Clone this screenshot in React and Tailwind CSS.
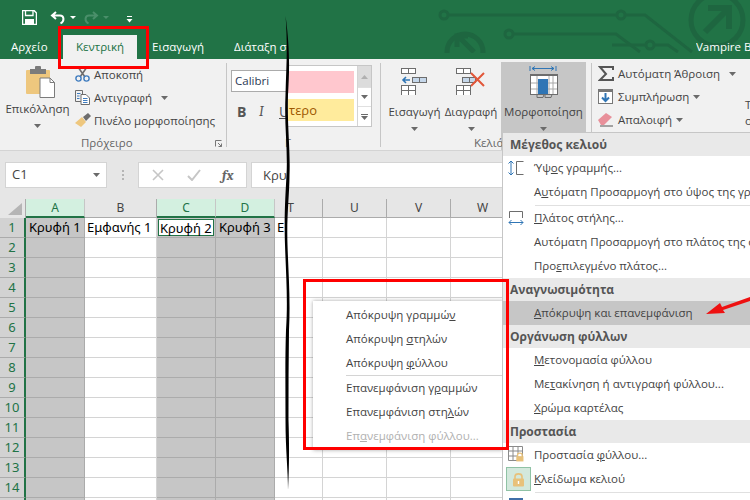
import React from "react";

const ui = { fontFamily: '"Open Sans", "Noto Sans", sans-serif' };
const cellFont = { fontFamily: '"Noto Sans", "Open Sans", sans-serif' };

const Caret = ({ className = "" }) => (
  <svg width="7" height="4" viewBox="0 0 7 4" className={className}>
    <path d="M0 0h7L3.5 4z" fill="#6a6a6a" />
  </svg>
);

const ScreenCircuit = () => (
  <svg className="absolute left-0 top-0" width="750" height="53" viewBox="0 0 750 53" fill="none" stroke="#1e6640" strokeWidth="3">
    <circle cx="444" cy="15" r="4" />
    <circle cx="621" cy="15" r="4" />
    <path d="M448 15H617M625 15H645L692 52" />
    <circle cx="509" cy="34" r="4" />
    <path d="M513 34H616L640 52" />
    <circle cx="650" cy="45" r="4" />
    <path d="M612 45H646M654 45H668L678 52" />
    <circle cx="465" cy="52" r="18" strokeWidth="5" />
    <path d="M474 52L458 36M457 47V36H468" strokeWidth="5" />
    <circle cx="717" cy="20" r="26" strokeWidth="5" />
    <path d="M705 32L727 10M708 8H729V29" strokeWidth="6" />
  </svg>
);

const TitleBar = () => (
  <div className="h-[35px] flex items-center pl-[22px]">
    <svg width="15" height="15" viewBox="0 0 15 15" className="relative">
      <path d="M0.5 0.5H12L14.5 3V14.5H0.5z" fill="none" stroke="#fff" strokeWidth="1.5" />
      <path d="M3.5 1V5.5H11V1" fill="none" stroke="#fff" strokeWidth="1.3" />
      <path d="M3 9H12V14H3z" fill="#fff" />
    </svg>
    <svg width="16" height="14" viewBox="0 0 16 14" className="ml-[13px] relative">
      <path d="M6 1L2 4.5L6 8M2 4.5H10C14 4.5 15 10 10.5 12.5" fill="none" stroke="#fff" strokeWidth="2" />
    </svg>
    <svg width="6" height="3" viewBox="0 0 6 3" className="ml-[4px] relative">
      <path d="M0 0h6L3 3z" fill="#fff" />
    </svg>
    <svg width="16" height="14" viewBox="0 0 16 14" className="ml-[7px] relative">
      <path d="M10 1L14 4.5L10 8M14 4.5H6C2 4.5 1 10 5.5 12.5" fill="none" stroke="#4a8f6a" strokeWidth="2" />
    </svg>
    <svg width="6" height="3" viewBox="0 0 6 3" className="ml-[4px] relative">
      <path d="M0 0h6L3 3z" fill="#4a8f6a" />
    </svg>
    <svg width="7" height="7" viewBox="0 0 7 7" className="ml-[17px] mt-[3px] relative">
      <path d="M1 0.5H6" stroke="#fff" />
      <path d="M0.5 3h6L3.5 6.5z" fill="#fff" />
    </svg>
  </div>
);

const Tabs = () => (
  <div className="h-[24px] flex items-center text-white text-[11.5px] relative">
    <span className="ml-[11px] w-[52px]">Αρχείο</span>
    <span className="h-full w-[74px] bg-[#f1f1f1] text-[#217346] flex items-center justify-center">Κεντρική</span>
    <span className="ml-[15px] w-[82px]">Εισαγωγή</span>
    <span className="w-[54px] whitespace-nowrap overflow-hidden">Διάταξη σ</span>
    <span className="ml-auto whitespace-nowrap w-[54px] overflow-hidden">Vampire B</span>
  </div>
);

const ClipboardIcon = () => (
  <svg width="29" height="32" viewBox="0 0 29 32">
    <rect x="0" y="4" width="24" height="24" rx="1" fill="#eec77e" />
    <rect x="4" y="3" width="16" height="5" fill="#7b7b7b" />
    <rect x="9" y="0" width="6" height="5" rx="1" fill="#7b7b7b" />
    <path d="M14 12H24L28.5 16.5V31.5H14z" fill="#fff" stroke="#7b7b7b" />
    <path d="M24 12V16.5H28.5" fill="none" stroke="#7b7b7b" />
  </svg>
);

const ScissorsIcon = () => (
  <svg width="15" height="15" viewBox="0 0 15 15" fill="none">
    <path d="M3 0L10 10M12 0L5 10" stroke="#6d6d6d" strokeWidth="1.6" />
    <circle cx="3.5" cy="11.5" r="2.6" stroke="#3f7cbf" strokeWidth="1.4" />
    <circle cx="11.5" cy="11.5" r="2.6" stroke="#3f7cbf" strokeWidth="1.4" />
  </svg>
);

const CopyIcon = () => (
  <svg width="15" height="15" viewBox="0 0 15 15" fill="none">
    <path d="M0.5 0.5H7.5V11.5H0.5z" stroke="#6d6d6d" />
    <path d="M6 4.5H11L14.5 8V14.5H6z" fill="#fff" stroke="#6d6d6d" />
    <path d="M2 3.5H5.5M2 6H4.5M2 8.5H4.5M8 8.5H12.5M8 10.5H12.5M8 12.5H12.5" stroke="#3f7cbf" />
  </svg>
);

const BrushIcon = () => (
  <svg width="17" height="15" viewBox="0 0 17 15">
    <path d="M0 10L7 4L11 9L6 14C4 13 2 11 0 10z" fill="#eec77e" />
    <path d="M8 4L13 0L16 3L11 8z" fill="#6d6d6d" />
  </svg>
);

const TableMini = ({ x, y }) => (
  <g fill="#fff" stroke="#6d6d6d">
    <rect x={x} y={y} width="7" height="5" />
    <rect x={x + 7} y={y} width="7" height="5" />
  </g>
);

const InsertCellsIcon = () => (
  <svg width="27" height="27" viewBox="0 0 27 27">
    <rect x="0.5" y="0.5" width="7" height="5" fill="#fff" stroke="#6d6d6d" />
    <rect x="7.5" y="0.5" width="7" height="5" fill="#fff" stroke="#6d6d6d" />
    <rect x="11.5" y="9.5" width="7" height="5" fill="#c5d7ea" stroke="#6d6d6d" />
    <rect x="18.5" y="9.5" width="7" height="5" fill="#c5d7ea" stroke="#6d6d6d" />
    <path d="M2 12H9M5 9L2 12L5 15" fill="none" stroke="#2f75b5" strokeWidth="1.6" />
    <TableMini x={0.5} y={17.5} />
    <TableMini x={0.5} y={22.5} />
  </svg>
);

const DeleteCellsIcon = () => (
  <svg width="30" height="27" viewBox="0 0 30 27">
    <rect x="0.5" y="0.5" width="7" height="5" fill="#fff" stroke="#6d6d6d" />
    <rect x="7.5" y="0.5" width="7" height="5" fill="#fff" stroke="#6d6d6d" />
    <rect x="6.5" y="9.5" width="7" height="5" fill="#c5d7ea" stroke="#6d6d6d" />
    <rect x="13.5" y="9.5" width="6" height="5" fill="#c5d7ea" stroke="#6d6d6d" />
    <path d="M15 5L28 18M28 5L15 18" stroke="#e2573a" strokeWidth="2" />
    <TableMini x={0.5} y={17.5} />
    <TableMini x={0.5} y={22.5} />
  </svg>
);

const FormatCellsIcon = () => (
  <svg width="29" height="32" viewBox="0 0 29 32" fill="none">
    <path d="M1 0V5M27 0V5M3 2.5H25M6 0.5L3 2.5L6 4.5M22 0.5L25 2.5L22 4.5" stroke="#2f75b5" />
    <rect x="1.5" y="8.5" width="27" height="20" fill="#fff" stroke="#6d6d6d" />
    <rect x="1" y="8" width="28" height="2" fill="#6d6d6d" />
    <path d="M8 10V28M20 10V28M24 10V28M2 17H28M2 23H28" stroke="#a8a8a8" />
    <rect x="9" y="13" width="10" height="15" fill="#2f75b5" />
    <path d="M8 28.5V31.5H14L15 28.5M16 28.5V31.5H22L23 28.5" stroke="#6d6d6d" />
  </svg>
);

const SmallRow = ({ icon, label, caret, iconWidth = "w-[19px]" }) => (
  <div className="flex items-center h-[23px]">
    <span className={`${iconWidth} flex items-center shrink-0`}>{icon}</span>
    <span className="whitespace-nowrap">{label}</span>
    {caret}
  </div>
);

const BigButton = ({ icon, label, width }) => (
  <div className={`flex flex-col items-center shrink-0 ${width}`}>
    <div className="h-[34px] flex items-center justify-center mt-[2px]">{icon}</div>
    <div className="mt-[5px] leading-[18px] whitespace-nowrap">{label}</div>
    <Caret className="mt-[6px]" />
  </div>
);

const Separator = () => <div className="w-px h-[84px] bg-[#c6c6c6] mt-[4px] shrink-0" />;

const Ribbon = () => (
  <div className="h-[92px] bg-[#f1f1f1] border-b border-[#d4d4d4] flex text-[11.5px] text-[#444] overflow-hidden">
    {/* Πρόχειρο */}
    <div className="w-[226px] shrink-0 relative flex">
      <div className="w-[75px] flex flex-col items-center">
        <div className="h-[34px] mt-[6px] ml-[5px] flex items-center"><ClipboardIcon /></div>
        <div className="mt-[1px] leading-[18px]">Επικόλληση</div>
        <Caret className="mt-[6px]" />
      </div>
      <div className="pt-[4px]">
        <SmallRow icon={<ScissorsIcon />} label="Αποκοπή" />
        <SmallRow icon={<CopyIcon />} label="Αντιγραφή" caret={<Caret className="ml-[9px]" />} />
        <SmallRow icon={<BrushIcon />} label="Πινέλο μορφοποίησης" />
      </div>
      <div className="absolute left-[81px] top-[75px] text-[#666]">Πρόχειρο</div>
      <svg width="7" height="7" viewBox="0 0 7 7" className="absolute left-[215px] top-[81px]">
        <path d="M0.5 6.5V0.5H6.5M3 3L6.5 6.5M6.5 3.5V6.5H3.5" fill="none" stroke="#777" />
      </svg>
    </div>
    <Separator />
    {/* Γραμματοσειρά */}
    <div className="w-[153px] shrink-0 relative">
      <div className="ml-[4px] mt-[11px] w-[70px] h-[22px] bg-white border border-[#ababab] pl-[3px] leading-[20px] text-[#2b3a55]">Calibri</div>
      <div className="flex items-center ml-[10px] mt-[9px] h-[20px] text-[14px] text-[#555]">
        <span className="w-[22px] font-bold">B</span>
        <span className="w-[20px] italic font-serif">I</span>
        <span className="underline">U</span>
      </div>
      <div className="absolute left-[60px] top-[6px] w-[85px] h-[62px] bg-white border border-[#c6c6c6] flex">
        <div className="w-[66px] flex flex-col pt-[5px] gap-[6px]">
          <div className="h-[22px] bg-[#ffc7ce]" />
          <div className="h-[22px] bg-[#ffeb9c] text-[#9c5700] text-[13px] leading-[22px] pl-[1px] whitespace-nowrap overflow-hidden">τερο</div>
        </div>
        <div className="ml-auto w-[14px] flex flex-col border-l border-[#d4d4d4]">
          <div className="h-[21px] bg-[#dcdcdc] flex items-center justify-center"><svg width="7" height="4" viewBox="0 0 7 4"><path d="M0 4h7L3.5 0z" fill="#b0b0b0" /></svg></div>
          <div className="h-[20px] flex items-center justify-center border-y border-[#e0e0e0]"><Caret /></div>
          <div className="flex-1 flex flex-col items-center justify-center gap-[1px]"><div className="w-[7px] h-px bg-[#6a6a6a]" /><Caret /></div>
        </div>
      </div>
      <div className="absolute left-[58px] top-[75px] text-[#666]">Γ</div>
    </div>
    <Separator />
    {/* Κελιά */}
    <div className="w-[210px] shrink-0 relative flex pl-[6px] pt-[3px]">
      <BigButton width="w-[55px]" icon={<InsertCellsIcon />} label="Εισαγωγή" />
      <BigButton width="w-[58px]" icon={<DeleteCellsIcon />} label="Διαγραφή" />
      <div className="absolute left-[120px] top-[3px] w-[85px] h-[89px] bg-[#c6c6c6] flex flex-col items-center">
        <div className="h-[34px] flex items-center justify-center mt-[3px]"><FormatCellsIcon /></div>
        <div className="mt-[4px] leading-[18px] whitespace-nowrap">Μορφοποίηση</div>
        <Caret className="mt-[6px]" />
      </div>
      <div className="absolute left-[93px] top-[75px] text-[#666]">Κελιά</div>
    </div>
    <Separator />
    {/* Επεξεργασία */}
    <div className="flex-1 relative pl-[6px] pt-[3px]">
      <SmallRow
        iconWidth="w-[20px]"
        icon={<svg width="16" height="16" viewBox="0 0 16 16"><path d="M15 4V1H2L8 8L2 14H15V11" fill="none" stroke="#555" strokeWidth="2" /></svg>}
        label="Αυτόματη Άθροιση"
        caret={<Caret className="ml-[9px]" />}
      />
      <SmallRow
        iconWidth="w-[20px]"
        icon={<svg width="15" height="15" viewBox="0 0 15 15"><rect x="0.5" y="0.5" width="14" height="14" fill="#fff" stroke="#777" /><rect width="15" height="3" fill="#777" /><path d="M7.5 4V12M4 8.5L7.5 12L11 8.5" fill="none" stroke="#2f75b5" strokeWidth="2" /></svg>}
        label="Συμπλήρωση"
        caret={<Caret className="ml-[4px]" />}
      />
      <SmallRow
        iconWidth="w-[20px]"
        icon={<svg width="15" height="15" viewBox="0 0 15 15"><path d="M0 8L8 1L14 5L6 13H3z" fill="#e8909a" /><path d="M2 14H15" stroke="#555" /></svg>}
        label="Απαλοιφή"
        caret={<Caret className="ml-[4px]" />}
      />
      <div className="absolute left-[153px] top-[38px] leading-[16px]">Τ<br />ο</div>
    </div>
  </div>
);

const FormulaBar = () => (
  <div className="h-[48px] bg-[#e6e6e6] flex pt-[11px] pl-[5px] text-[13px] text-[#444]">
    <div className="w-[102px] h-[26px] bg-white border border-[#d4d4d4] flex items-center justify-between pl-[6px] pr-[6px]">
      C1
      <Caret />
    </div>
    <div className="w-[31px] h-[26px] flex flex-col items-center justify-center gap-[2px]">
      <span className="w-[2px] h-[2px] bg-[#b5b5b5]" />
      <span className="w-[2px] h-[2px] bg-[#b5b5b5]" />
      <span className="w-[2px] h-[2px] bg-[#b5b5b5]" />
    </div>
    <div className="w-[109px] h-[26px] bg-white border border-[#d4d4d4] flex items-center">
      <svg width="14" height="12" viewBox="0 0 14 12" className="ml-[12px]"><path d="M2 1L12 11M12 1L2 11" stroke="#c6c6c6" strokeWidth="1.6" /></svg>
      <svg width="14" height="12" viewBox="0 0 14 12" className="ml-[22px]"><path d="M1 7L5 11L13 1" fill="none" stroke="#c6c6c6" strokeWidth="2" /></svg>
      <span className="ml-[21px] italic font-serif font-bold text-[14px] text-[#666]">fx</span>
    </div>
    <div className="ml-[4px] flex-1 h-[26px] bg-white border border-[#d4d4d4] pl-[11px] leading-[24px]">Κρυ</div>
  </div>
);

const columns = [
  { id: "A", w: "w-[59px]", hidden: true },
  { id: "B", w: "w-[72px]" },
  { id: "C", w: "w-[59px]", hidden: true },
  { id: "D", w: "w-[59px]", hidden: true },
  { id: "T", w: "w-[48px]", pad: "pr-[16px]" },
  { id: "U", w: "w-[64px]" },
  { id: "V", w: "w-[64px]" },
  { id: "W", w: "w-[64px]" },
  { id: "X", w: "w-[64px]" },
  { id: "Y", w: "w-[64px]" },
  { id: "Z", w: "w-[64px]" },
];

const firstRow = { A: "Κρυφή 1", B: "Εμφανής 1", C: "Κρυφή 2", D: "Κρυφή 3", T: "Ε" };
const rows = [1, 2, 3, 4, 5, 6, 7, 8, 9, 10, 11, 12, 13, 14, 15];

const Sheet = () => (
  <div className="flex-1 overflow-hidden bg-white" style={cellFont}>
    <div className="flex h-[19px] bg-[#e6e6e6] text-[12px] text-[#444]">
      <div className="w-[26px] shrink-0 border-r border-[#ababab] flex items-end justify-end pr-[3px] pb-[3px]">
        <svg width="14" height="12" viewBox="0 0 14 12"><path d="M14 0V12H0z" fill="#b5b5b5" /></svg>
      </div>
      {columns.map((c) => (
        <div
          key={c.id}
          className={
            c.hidden
              ? `${c.w} shrink-0 flex items-center justify-center bg-[#d3f0e0] text-[#217346] border-r border-[#c6c6c6] border-b-2 border-b-[#217346]`
              : `${c.w} ${c.pad || ""} shrink-0 flex items-center justify-center border-r border-[#ababab] border-b border-b-[#ababab]`
          }
        >
          {c.id}
        </div>
      ))}
    </div>
    {rows.map((r) => (
      <div key={r} className="flex h-[20px] text-[13px] text-black">
        <div className="w-[26px] shrink-0 bg-[#d2d2d2] border-r-2 border-[#217346] border-b border-b-[#ababab] text-[#217346] flex items-center justify-center text-[13px]">
          {r}
        </div>
        {columns.map((c) => {
          const active = r === 1 && c.id === "C";
          return (
            <div
              key={c.id}
              className={
                c.hidden
                  ? `${c.w} shrink-0 bg-[#c6c6c6] border-r border-[#ababab] border-b border-b-[#ababab] relative pl-[3px] leading-[19px] whitespace-nowrap`
                  : `${c.w} shrink-0 border-r border-[#d4d4d4] border-b border-b-[#d4d4d4] pl-[2px] leading-[19px] whitespace-nowrap overflow-hidden`
              }
            >
              {active ? (
                <div className="absolute inset-[1px] bg-white border border-[#217346] pl-[1px] leading-[16px]">{firstRow.C}</div>
              ) : r === 1 ? (
                firstRow[c.id]
              ) : null}
            </div>
          );
        })}
      </div>
    ))}
  </div>
);

const MenuHeader = ({ children }) => (
  <div className="h-[23px] bg-[#e9e9e9] pl-[7px] font-bold text-[12px] text-[#555] flex items-center">{children}</div>
);

const MenuItem = ({ children, icon, hover }) => (
  <div className={`h-[24px] flex items-center pl-[31px] relative whitespace-nowrap ${hover ? "bg-[#c6c6c6]" : ""}`}>
    {icon}
    <span>{children}</span>
  </div>
);

const MenuSep = () => <div className="h-px mt-[1px] bg-[#e0e0e0] ml-[32px]" />;

const LockGlyph = ({ size = 15 }) => (
  <svg width={size} height={size} viewBox="0 0 15 15">
    <path d="M4 7V4.5C4 1 11 1 11 4.5V7" fill="none" stroke="#e8c17a" strokeWidth="1.6" />
    <rect x="2" y="6.5" width="11" height="8" rx="1" fill="#e8c17a" />
    <rect x="6.8" y="9" width="1.4" height="3" fill="#fff" />
  </svg>
);

const FormatMenu = () => (
  <div className="absolute left-[502px] top-[132px] w-[260px] h-[368px] bg-white border-l border-t border-[#c6c6c6] text-[11.5px] text-[#444] overflow-hidden" style={ui}>
    <MenuHeader>Μέγεθος κελιού</MenuHeader>
    <MenuItem
      icon={
        <svg width="16" height="16" viewBox="0 0 16 16" className="absolute left-[5px] top-[4px]" fill="none">
          <path d="M3 1V15M0.5 3.5L3 1L5.5 3.5M0.5 12.5L3 15L5.5 12.5" stroke="#2f75b5" />
          <path d="M15.5 1.5H8.5V14.5H15.5" stroke="#6d6d6d" />
        </svg>
      }
    >
      Ύψ<u>ο</u>ς γραμμής...
    </MenuItem>
    <MenuItem>
      Α<u>υ</u>τόματη Προσαρμογή στο ύψος της γραμμής
    </MenuItem>
    <MenuSep />
    <MenuItem
      icon={
        <svg width="16" height="16" viewBox="0 0 16 16" className="absolute left-[5px] top-[4px]" fill="none">
          <path d="M1.5 8V1.5H14.5V8" stroke="#6d6d6d" />
          <path d="M1 12.5H15M3.5 10L1 12.5L3.5 15M12.5 10L15 12.5L12.5 15" stroke="#2f75b5" />
        </svg>
      }
    >
      <u>Π</u>λάτος στήλης...
    </MenuItem>
    <MenuItem>Αυτόματη Προσαρμογή στο πλάτος της στήλης</MenuItem>
    <MenuItem>
      Προ<u>ε</u>πιλεγμένο πλάτος...
    </MenuItem>
    <MenuHeader>Αναγνωσιμότητα</MenuHeader>
    <MenuItem hover>
      <u>Α</u>πόκρυψη και επανεμφάνιση
    </MenuItem>
    <MenuHeader>Οργάνωση φύλλων</MenuHeader>
    <MenuItem>
      <u>Μ</u>ετονομασία φύλλου
    </MenuItem>
    <MenuItem>
      Με<u>τ</u>ακίνηση ή αντιγραφή φύλλου...
    </MenuItem>
    <MenuItem>
      <u>Χ</u>ρώμα καρτέλας
    </MenuItem>
    <MenuHeader>Προστασία</MenuHeader>
    <MenuItem
      icon={
        <span className="absolute left-[5px] top-[3px]">
          <svg width="16" height="16" viewBox="0 0 16 16" fill="none">
            <path d="M0.5 0.5H14.5V14.5H0.5zM0.5 5H14.5M0.5 10H14.5M5 0.5V14.5M10 0.5V14.5" stroke="#8a8a8a" />
            <g transform="translate(7 6) scale(0.65)">
              <path d="M4 7V4.5C4 1 11 1 11 4.5V7" fill="#fff" stroke="#e8c17a" strokeWidth="2" />
              <rect x="2" y="6.5" width="11" height="8" fill="#e8c17a" />
            </g>
          </svg>
        </span>
      }
    >
      Προστασία <u>φ</u>ύλλου...
    </MenuItem>
    <MenuItem
      icon={
        <span className="absolute left-[3px] top-0 w-[25px] h-[24px] bg-[#d3e8dc] border border-[#8fc2a5] flex items-center justify-center">
          <LockGlyph />
        </span>
      }
    >
      <u>Κ</u>λείδωμα κελιού
    </MenuItem>
    <MenuSep />
    <div className="ml-[6px] mt-[5px] w-[14px] h-[14px] bg-[#3f6fa8]" />
  </div>
);

const ContextRow = ({ children, disabled }) => (
  <div className={`h-[24px] pl-[33px] flex items-center whitespace-nowrap ${disabled ? "text-[#b1b1b1]" : ""}`}>
    <span>{children}</span>
  </div>
);

const ContextMenu = () => (
  <div className="absolute left-[313px] top-[301px] w-[190px] pt-[2px] pb-[2px] bg-white shadow-[0_0_4px_rgba(0,0,0,0.35)] text-[11.5px] text-[#444]" style={ui}>
    <ContextRow>Απόκρυψη γραμμώ<u>ν</u></ContextRow>
    <ContextRow>Απόκρυψη <u>σ</u>τηλών</ContextRow>
    <ContextRow>Απόκρυψη <u>φ</u>ύλλου</ContextRow>
    <div className="h-px bg-[#d4d4d4] ml-[33px] mr-[1px]" />
    <ContextRow>Επανεμφάνιση γ<u>ρ</u>αμμών</ContextRow>
    <ContextRow>Επανεμφάνιση στη<u>λ</u>ών</ContextRow>
    <ContextRow disabled>Επ<u>α</u>νεμφάνιση φύλλου...</ContextRow>
  </div>
);

export default function App() {
  return (
    <div className="w-[750px] h-[500px] relative overflow-hidden flex flex-col bg-white" style={ui}>
      <div className="relative bg-[#217346] shrink-0">
        <ScreenCircuit />
        <TitleBar />
        <Tabs />
      </div>
      <Ribbon />
      <FormulaBar />
      <Sheet />
      <ContextMenu />
      <FormatMenu />
      {/* red highlights */}
      <div className="absolute left-[58px] top-[26px] w-[91px] h-[43px] border-[3px] border-[#ff0000]" />
      <div className="absolute left-[303px] top-[279px] w-[206px] h-[171px] border-[3px] border-[#ff0000]" />
      <svg className="absolute left-0 top-0" width="750" height="500" viewBox="0 0 750 500">
        <path d="M750 297L722 307L720 303L706 314L725 313L723 310L750 301z" fill="#ee1111" />
        <path
          d="M285.6 16C288 50 286 70 285.5 95C284 125 288 150 286.5 175C285.5 195 284 215 285 245C286 275 288 300 286 330C285 360 285.5 385 285.5 420C285.5 450 288 470 288 490C289 470 289.5 450 288.5 420C288.5 390 288.5 360 289 330C290.5 300 288.5 275 287.5 245C286.5 215 289.5 195 289.5 175C290.5 150 287 125 288 95C289.5 70 290 50 285.6 16z"
          fill="#000"
        />
      </svg>
    </div>
  );
}
